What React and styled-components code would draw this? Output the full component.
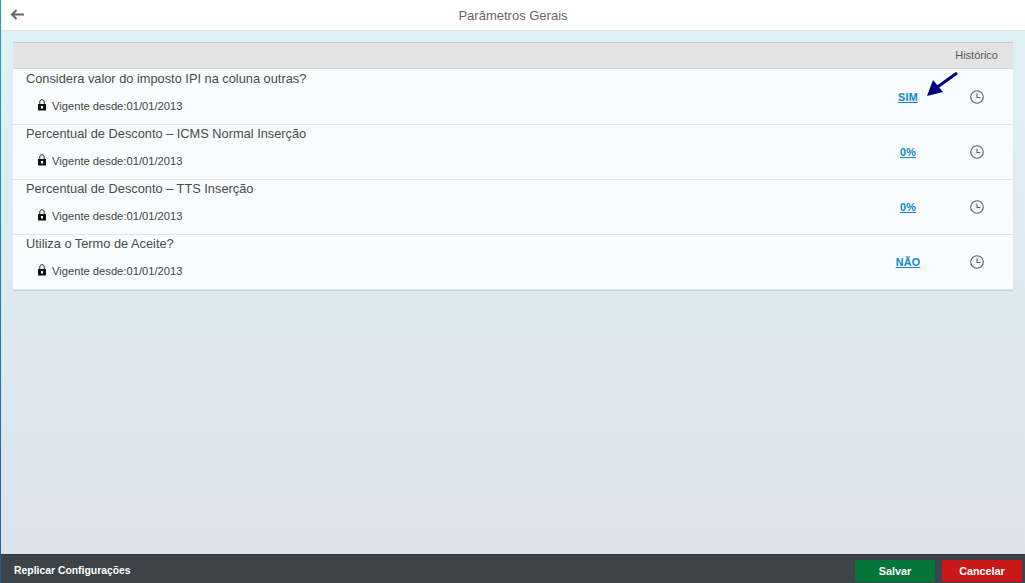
import styled, { createGlobalStyle } from "styled-components";

const GlobalStyle = createGlobalStyle`
  html, body {
    margin: 0;
    padding: 0;
    height: 100%;
    overflow: hidden;
  }
  #root {
    height: 100%;
  }
  * {
    box-sizing: border-box;
  }
`;

const params = [
  { title: "Considera valor do imposto IPI na coluna outras?", value: "SIM", since: "01/01/2013" },
  { title: "Percentual de Desconto – ICMS Normal Inserção", value: "0%", since: "01/01/2013" },
  { title: "Percentual de Desconto – TTS Inserção", value: "0%", since: "01/01/2013" },
  { title: "Utiliza o Termo de Aceite?", value: "NÃO", since: "01/01/2013" },
];

const Page = styled.div`
  display: flex;
  flex-direction: column;
  height: 583px;
  font-family: "Liberation Sans", Arial, sans-serif;
  background: linear-gradient(180deg, #dff1f4 0%, #dde2ea 100%);
  border-left: 1px solid #1ba3b5;
  border-image: linear-gradient(180deg, #18a5b4, #1a5fa8) 1;
`;

const TopBar = styled.header`
  position: relative;
  display: flex;
  align-items: center;
  justify-content: center;
  height: 31px;
  flex-shrink: 0;
  background: #fff;
  border-bottom: 1px solid #dfe5e8;
`;

const BackButton = styled.button`
  position: absolute;
  left: 9px;
  top: 7px;
  display: flex;
  padding: 0;
  border: 0;
  background: none;
`;

const PageTitle = styled.h1`
  margin: 0;
  font-size: 13px;
  font-weight: 400;
  color: #666;
`;

const Content = styled.main`
  flex: 1;
  padding: 11px 12px 0;
`;

const Table = styled.section`
  position: relative;
  background: #f8fcfd;
  border-bottom: 1px solid #c9cdcf;
`;

const TableHead = styled.div`
  display: flex;
  align-items: center;
  justify-content: flex-end;
  height: 27px;
  margin-bottom: 1px;
  padding: 0 15px 2px 0;
  background: #e3e3e3;
  border-top: 1px solid #c8c8c8;
  border-bottom: 1px solid #d4d6d6;
  font-size: 11px;
  color: #555;
`;

const Row = styled.div`
  display: grid;
  grid-template-columns: 1fr 66px 72px;
  height: 55px;
  border-bottom: 1px solid #e2e5e6;

  &:last-child {
    height: 54px;
    border-bottom: 0;
  }
`;

const RowText = styled.div`
  padding: 1px 0 0 13px;
`;

const RowTitle = styled.div`
  font-size: 12.8px;
  line-height: 15px;
  color: #4a4a4a;
`;

const Since = styled.div`
  display: flex;
  align-items: center;
  gap: 6px;
  margin: 13px 0 0 12px;
  font-size: 11.2px;
  line-height: 14px;
  color: #444;
`;

const ValueCell = styled.div`
  display: flex;
  justify-content: center;
  padding-top: 21px;
`;

const ValueLink = styled.a`
  font-size: 10.8px;
  line-height: 13px;
  height: 14px;
  font-weight: 700;
  letter-spacing: 0.2px;
  color: #0d86c6;
  text-decoration: underline;
`;

const ClockCell = styled.div`
  display: flex;
  justify-content: center;
  padding-top: 20px;
`;

const LockSvg = styled.svg`
  margin-top: -3px;
`;

const Annotation = styled.svg`
  position: absolute;
  left: 912px;
  top: 30px;
`;

const Footer = styled.footer`
  display: flex;
  align-items: center;
  justify-content: space-between;
  height: 29px;
  flex-shrink: 0;
  padding: 3px 3px 0 13px;
  background: #3c4449;
  border-top: 1px solid #33393d;
`;

const ReplicateLink = styled.span`
  font-size: 10.4px;
  font-weight: 700;
  color: #fff;
`;

const Actions = styled.div`
  display: flex;
  gap: 7px;
`;

const ActionButton = styled.button`
  width: 80px;
  height: 22px;
  padding: 0;
  border: 0;
  border-radius: 1px;
  background: ${(p) => p.$bg};
  font-family: inherit;
  font-size: 10.8px;
  font-weight: 700;
  color: #fff;
`;

const BackIcon = () => (
  <svg width="15" height="15" viewBox="0 0 15 15" fill="none" stroke="#666" strokeWidth="2">
    <path d="M14 7.5H2M6.5 3 2 7.5 6.5 12" />
  </svg>
);

const LockIcon = () => (
  <LockSvg width="8" height="12" viewBox="0 0 8 12">
    <path d="M1.800 5.500V2.900C1.800 1.500 2.700.7 4 .7s2.200.8 2.200 2.200v2.600" fill="none" stroke="#222" strokeWidth="1" />
    <path fillRule="evenodd" fill="#111" d="M0 5h8v6.500H0zM3 7v2.500h2V7z" />
  </LockSvg>
);

const ClockIcon = () => (
  <svg width="14" height="14" viewBox="0 0 14 14" fill="none" stroke="#5f5f5f" strokeWidth="1.1">
    <circle cx="7" cy="7" r="6.3" />
    <path d="M7 3.500V7.500H10.500" />
  </svg>
);

const App = () => {
  return (
    <Page>
      <GlobalStyle />
      <TopBar>
        <BackButton>
          <BackIcon />
        </BackButton>
        <PageTitle>Parâmetros Gerais</PageTitle>
      </TopBar>
      <Content>
        <Table>
          <TableHead>Histórico</TableHead>
          {params.map((param) => (
            <Row key={param.title}>
              <RowText>
                <RowTitle>{param.title}</RowTitle>
                <Since>
                  <LockIcon />
                  Vigente desde:{param.since}
                </Since>
              </RowText>
              <ValueCell>
                <ValueLink>{param.value}</ValueLink>
              </ValueCell>
              <ClockCell>
                <ClockIcon />
              </ClockCell>
            </Row>
          ))}
          <Annotation width="36" height="28" viewBox="0 0 36 28">
            <path d="M32 1 11 16" stroke="#00007f" strokeWidth="3" fill="none" />
            <path d="M2 24 8 8 18 20z" fill="#00007f" />
          </Annotation>
        </Table>
      </Content>
      <Footer>
        <ReplicateLink>Replicar Configurações</ReplicateLink>
        <Actions>
          <ActionButton $bg="#047637">Salvar</ActionButton>
          <ActionButton $bg="#c91818">Cancelar</ActionButton>
        </Actions>
      </Footer>
    </Page>
  );
};

export default App;
